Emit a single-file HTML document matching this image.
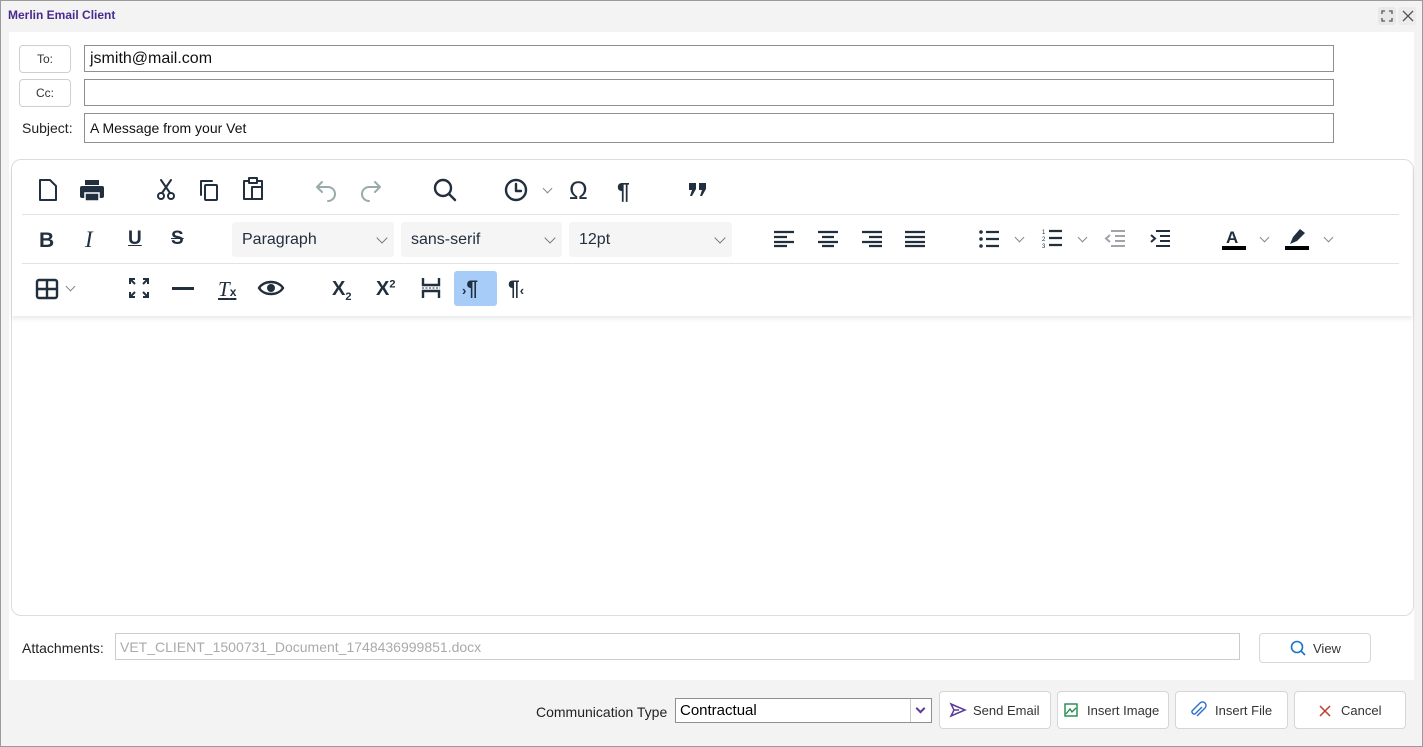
<!DOCTYPE html>
<html style="overflow:hidden;height:747px"><head><meta charset="utf-8"><style>
*{box-sizing:border-box;margin:0;padding:0}
body{width:1423px;height:747px;background:#f3f3f3;font-family:"Liberation Sans",sans-serif;position:relative;overflow:hidden}
.a{position:absolute}
.frame{left:0;top:0;width:1423px;height:747px;border:1px solid #9a9a9a}
.title{left:8px;top:8px;font-size:12px;font-weight:bold;color:#4b2a8f}
.white{left:9px;top:32px;width:1405px;height:648px;background:#fff}
.lbtn{border:1px solid #cfcfcf;border-radius:4px;background:#fff;font-size:12px;color:#333;text-align:center;line-height:27px}
.inp{border:1px solid #8f8f8f;background:#fff;font-size:15px;color:#111;padding-left:5px}
.editor{left:11px;top:159px;width:1403px;height:457px;border:1px solid #ddd;border-radius:10px;background:#fff}
.tb{left:12px;top:160px;width:1400px;height:156px;box-shadow:0 3px 4px rgba(0,0,0,.08);border-radius:10px 10px 0 0;background:#fff}
.sep{height:1px;background:#e3e3e3}
svg{position:absolute;overflow:visible}
.ic{stroke:#222f3e;stroke-width:2;fill:none;stroke-linecap:round;stroke-linejoin:round}
.sel{background:#f5f5f5;border-radius:3px;font-size:16px;color:#222f3e;padding-left:10px;line-height:36px}
.chev{position:absolute;right:8px;top:12px;width:8px;height:8px;border-right:1.5px solid #777;border-bottom:1.5px solid #777;transform:rotate(45deg)}
.sm{width:7px;height:7px;border-right:1.5px solid #888;border-bottom:1.5px solid #888;transform:rotate(45deg);position:absolute}
.gl{font-size:22px;color:#222f3e;font-weight:bold}
.btn{border:1px solid #d6d6d6;border-radius:4px;background:#fff;font-size:13px;color:#333;height:38px;line-height:38px}
</style></head><body>
<div class="a frame"></div>
<div class="a title">Merlin Email Client</div>
<div class="a" style="left:1378px;top:7px;width:18px;height:18px;background:#e8e8e8;border-radius:3px"></div>
<svg style="left:1382px;top:11px" width="10" height="10"><path d="M0 3V0H3M7 0H10V3M10 7V10H7M3 10H0V7" stroke="#555" stroke-width="1.3" fill="none"/></svg>
<div class="a" style="left:1398px;top:7px;width:18px;height:18px;background:#ececec;border-radius:3px"></div>
<svg style="left:1403px;top:11px" width="10" height="10"><path d="M0 0L10 10M10 0L0 10" stroke="#555" stroke-width="1.3"/></svg>
<div class="a white"></div>
<div class="a lbtn" style="left:19px;top:45px;width:52px;height:28px">To:</div>
<div class="a lbtn" style="left:19px;top:79px;width:52px;height:28px">Cc:</div>
<div class="a" style="left:22px;top:120px;font-size:14px;color:#222">Subject:</div>
<div class="a inp" style="left:84px;top:45px;width:1250px;height:27px;line-height:26px;font-size:16px">jsmith@mail.com</div>
<div class="a inp" style="left:84px;top:79px;width:1250px;height:27px"></div>
<div class="a inp" style="left:84px;top:113px;width:1250px;height:30px;line-height:29px;font-size:14px">A Message from your Vet</div>
<div class="a editor"></div>
<div class="a tb"></div>
<div class="a sep" style="left:22px;top:214px;width:1377px"></div>
<div class="a sep" style="left:22px;top:263px;width:1377px"></div>
<!-- row1 -->
<svg style="left:38px;top:179px" width="20" height="22" class="ic"><path d="M2 1H12L18 7V21H2Z"/></svg>
<svg style="left:80px;top:180px" width="24" height="22"><rect x="5" y="0" width="14" height="5" fill="#222f3e"/><rect x="0" y="6" width="24" height="12" rx="2" fill="#222f3e"/><rect x="5" y="13" width="14" height="8" fill="#222f3e" stroke="#fff" stroke-width="1.5"/></svg>
<svg style="left:156px;top:179px" width="20" height="22" class="ic"><circle cx="5" cy="17" r="3"/><circle cx="15" cy="17" r="3"/><path d="M6 14L15 1M14 14L5 1"/></svg>
<svg style="left:199px;top:179px" width="20" height="22" class="ic"><rect x="6" y="6" width="12" height="15" rx="1"/><path d="M2 16V2H13"/></svg>
<svg style="left:242px;top:177px" width="22" height="24" class="ic"><path d="M7 4H2V22H20V4H15"/><rect x="7" y="1" width="8" height="5"/><rect x="10" y="10" width="10" height="12"/></svg>
<svg style="left:315px;top:179px" width="22" height="22" class="ic"><path d="M7 3L2 8L7 13M2 8H13A7 7 0 0 1 13 22" stroke="#9aa"/></svg>
<svg style="left:360px;top:179px" width="22" height="22" class="ic"><path d="M15 3L20 8L15 13M20 8H9A7 7 0 0 0 9 22" stroke="#9aa"/></svg>
<svg style="left:433px;top:178px" width="24" height="24" class="ic"><circle cx="10" cy="10" r="8" stroke-width="2.4"/><path d="M16 16L22 22" stroke-width="2.4"/></svg>
<svg style="left:505px;top:179px" width="24" height="24" class="ic"><circle cx="11" cy="11" r="10" stroke-width="2.4"/><path d="M11 5V12H16" stroke-width="2.4"/></svg>
<div class="a sm" style="left:544px;top:185px"></div>
<div class="a gl" style="left:569px;top:177px;font-weight:normal;font-size:25px">Ω</div>
<div class="a gl" style="left:617px;top:178px;font-size:23px">¶</div>
<svg style="left:688px;top:183px" width="20" height="14"><path d="M1 0H8V6L4 13H2L4 7H1Z M11 0H18V6L14 13H12L14 7H11Z" fill="#222f3e"/></svg>
<!-- row2 -->
<div class="a" style="left:39px;top:229px;font-size:21px;font-weight:bold;color:#222f3e">B</div>
<div class="a" style="left:85px;top:227px;font-size:23px;font-style:italic;font-family:'Liberation Serif',serif;color:#222f3e">I</div>
<div class="a" style="left:128px;top:228px;font-size:19px;color:#222f3e;text-decoration:underline;font-weight:bold">U</div>
<div class="a" style="left:171px;top:228px;font-size:19px;color:#222f3e;text-decoration:line-through;font-weight:bold">S</div>
<div class="a sel" style="left:232px;top:222px;width:162px;height:35px">Paragraph<span class="chev"></span></div>
<div class="a sel" style="left:401px;top:222px;width:161px;height:35px">sans-serif<span class="chev"></span></div>
<div class="a sel" style="left:569px;top:222px;width:163px;height:35px">12pt<span class="chev"></span></div>
<svg style="left:774px;top:231px" width="20" height="16"><path d="M0 1H20M0 6H13M0 11H20M0 15H13" stroke="#222f3e" stroke-width="2.2"/></svg>
<svg style="left:818px;top:231px" width="20" height="16"><path d="M0 1H20M4 6H16M0 11H20M4 15H16" stroke="#222f3e" stroke-width="2.2"/></svg>
<svg style="left:862px;top:231px" width="20" height="16"><path d="M0 1H20M7 6H20M0 11H20M7 15H20" stroke="#222f3e" stroke-width="2.2"/></svg>
<svg style="left:905px;top:231px" width="20" height="16"><path d="M0 1H20M0 6H20M0 11H20M0 15H20" stroke="#222f3e" stroke-width="2.2"/></svg>
<svg style="left:979px;top:230px" width="20" height="18"><path d="M7 2H20M7 9H20M7 16H20" stroke="#222f3e" stroke-width="2.2"/><circle cx="2" cy="2" r="1.8" fill="#222f3e"/><circle cx="2" cy="9" r="1.8" fill="#222f3e"/><circle cx="2" cy="16" r="1.8" fill="#222f3e"/></svg>
<div class="a sm" style="left:1016px;top:234px"></div>
<svg style="left:1042px;top:228px" width="20" height="20"><path d="M7 3H20M7 10H20M7 17H20" stroke="#222f3e" stroke-width="2.2"/><text x="0" y="6" font-size="6" fill="#222f3e">1</text><text x="0" y="13" font-size="6" fill="#222f3e">2</text><text x="0" y="20" font-size="6" fill="#222f3e">3</text></svg>
<div class="a sm" style="left:1079px;top:234px"></div>
<svg style="left:1105px;top:230px" width="20" height="18"><path d="M6 1H20M10 6H20M10 11H20M6 16H20M5 5L1 8.5L5 12" stroke="#a0a4aa" stroke-width="2" fill="none"/></svg>
<svg style="left:1150px;top:230px" width="20" height="18"><path d="M6 1H20M10 6H20M10 11H20M6 16H20M1 5L5 8.5L1 12" stroke="#222f3e" stroke-width="2" fill="none"/></svg>
<div class="a" style="left:1226px;top:228px;font-size:17px;color:#222f3e;font-weight:bold">A</div>
<div class="a" style="left:1222px;top:246px;width:24px;height:4px;background:#000"></div>
<div class="a sm" style="left:1261px;top:234px"></div>
<svg style="left:1287px;top:228px" width="20" height="18"><path d="M3 16L6 9L13 1L18 5L10 13Z" fill="#222f3e"/></svg>
<div class="a" style="left:1285px;top:246px;width:24px;height:4px;background:#000"></div>
<div class="a sm" style="left:1325px;top:234px"></div>
<!-- row3 -->
<svg style="left:36px;top:279px" width="22" height="20"><rect x="1" y="1" width="20" height="18" rx="2" fill="none" stroke="#222f3e" stroke-width="2.4"/><path d="M1 10H21M11 1V19" stroke="#222f3e" stroke-width="2.4"/></svg>
<div class="a sm" style="left:67px;top:283px"></div>
<svg style="left:129px;top:278px" width="20" height="20"><path d="M1 6V1H6M14 1H19V6M19 14V19H14M6 19H1V14M1 1L6 6M19 1L14 6M19 19L14 14M1 19L6 14" stroke="#222f3e" stroke-width="2" fill="none"/></svg>
<div class="a" style="left:172px;top:287px;width:22px;height:2.5px;background:#222f3e"></div>
<div class="a" style="left:218px;top:277px;font-size:21px;font-style:italic;color:#222f3e;font-family:'Liberation Serif',serif;text-decoration:underline">T<span style="font-size:12px;font-style:normal;font-family:'Liberation Sans';font-weight:bold">x</span></div>
<svg style="left:258px;top:278px" width="26" height="20"><path d="M1 10C6 2 20 2 25 10C20 18 6 18 1 10Z" fill="none" stroke="#222f3e" stroke-width="2.4"/><circle cx="13" cy="10" r="4" fill="#222f3e"/></svg>
<div class="a" style="left:332px;top:278px;font-size:20px;color:#222f3e;font-weight:bold">X<sub style="font-size:11px">2</sub></div>
<div class="a" style="left:376px;top:278px;font-size:20px;color:#222f3e;font-weight:bold">X<sup style="font-size:11px">2</sup></div>
<svg style="left:421px;top:277px" width="20" height="22"><path d="M2 1V8H18V1M2 21V14H18V21" stroke="#222f3e" stroke-width="2.4" fill="none"/><path d="M1 11H19" stroke="#222f3e" stroke-dasharray="2 1.5"/></svg>
<div class="a" style="left:454px;top:271px;width:43px;height:35px;background:#a6ccf7;border-radius:3px"></div>
<div class="a gl" style="left:462px;top:277px;font-size:21px"><span style="font-size:13px">›</span>¶</div>
<div class="a gl" style="left:508px;top:277px;font-size:21px">¶<span style="font-size:13px">‹</span></div>
<!-- attachments -->
<div class="a" style="left:22px;top:640px;font-size:14px;color:#222">Attachments:</div>
<div class="a" style="left:115px;top:633px;width:1125px;height:27px;border:1px solid #ccc;font-size:14px;color:#aaa;line-height:26px;padding-left:4px">VET_CLIENT_1500731_Document_1748436999851.docx</div>
<div class="a btn" style="left:1259px;top:633px;width:112px;height:30px;line-height:30px;padding-left:53px">View</div>
<svg style="left:1290px;top:640px" width="16" height="16"><circle cx="7" cy="7" r="5.5" stroke="#1a73c8" stroke-width="1.6" fill="none"/><path d="M11 11L15 15" stroke="#1a73c8" stroke-width="1.6"/></svg>
<!-- bottom -->
<div class="a" style="left:536px;top:704px;font-size:14px;color:#222">Communication Type</div>
<div class="a" style="left:675px;top:698px;width:257px;height:25px;border:1px solid #8f8f8f;background:#fff;font-size:15px;line-height:23px;padding-left:4px">Contractual</div>
<div class="a" style="left:910px;top:699px;width:1px;height:23px;background:#ccc"></div>
<div class="a" style="left:917px;top:705px;width:7px;height:7px;border-right:2px solid #5a3a9a;border-bottom:2px solid #5a3a9a;transform:rotate(45deg)"></div>
<div class="a btn" style="left:939px;top:691px;width:112px;padding-left:33px">Send Email</div>
<svg style="left:950px;top:703px" width="16" height="14"><path d="M1 1L15 7L1 13L4 7Z M4 7H9" stroke="#5a3a9a" stroke-width="1.5" fill="none"/></svg>
<div class="a btn" style="left:1057px;top:691px;width:112px;padding-left:29px">Insert Image</div>
<svg style="left:1064px;top:703px" width="14" height="14"><rect x="1" y="1" width="12" height="12" fill="none" stroke="#1e8a4a" stroke-width="1.4"/><path d="M2 11L6 6L8 9L12 5" stroke="#1e8a4a" stroke-width="1.3" fill="none"/></svg>
<div class="a btn" style="left:1175px;top:691px;width:113px;padding-left:39px">Insert File</div>
<svg style="left:1190px;top:701px" width="16" height="18"><path d="M12 6L5 13A2.5 2.5 0 0 1 2 10L10 2A3.5 3.5 0 0 1 15 7L7 15" stroke="#2a6fd0" stroke-width="1.4" fill="none"/></svg>
<div class="a btn" style="left:1294px;top:691px;width:112px;padding-left:46px">Cancel</div>
<svg style="left:1319px;top:705px" width="12" height="12"><path d="M1 1L11 11M11 1L1 11" stroke="#c0392b" stroke-width="1.5"/></svg>
</body></html>
